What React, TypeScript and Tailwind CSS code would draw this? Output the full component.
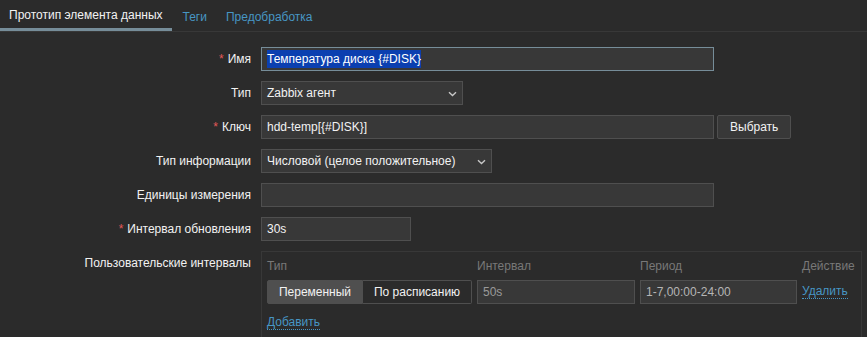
const Req = () => <span className="text-[#e45959] mr-[4px]">*</span>;

const Chevron = () => (
  <svg width="9" height="6" viewBox="0 0 9 6" className="absolute right-[5px] top-[9px]">
    <path d="M1 1.2l3.5 3.3 3.5-3.3" fill="none" stroke="#c8c8c8" strokeWidth="1.4" />
  </svg>
);

const Row = ({ label, req, children }: { label: string; req?: boolean; children: React.ReactNode }) => (
  <div className="flex items-start">
    <div className="w-[251px] h-[24px] flex items-center justify-end text-[#f2f2f2] shrink-0">
      {req && <Req />}
      {label}
    </div>
    <div className="ml-[10px] flex items-start gap-[3px]">{children}</div>
  </div>
);

const inputCls =
  "h-[24px] bg-[#383838] border border-[#4f4f4f] flex items-center px-[5px] text-[#f2f2f2]";

const Select = ({ value, w }: { value: string; w: string }) => (
  <div className={`${inputCls} relative ${w}`}>
    {value}
    <Chevron />
  </div>
);

export default function App() {
  return (
    <div
      className="w-[867px] h-[337px] overflow-hidden bg-[#2b2b2b] text-[12px]"
      style={{ fontFamily: '"Liberation Sans", Arial, sans-serif' }}
    >
      <div className="flex h-[32px] border-b border-[#383838]">
        <div className="px-[9px] h-[31px] flex items-center text-[#f2f2f2] border-b-[3px] border-[#768d99] pt-[2px]">
          Прототип элемента данных
        </div>
        <div className="pl-[11px] pr-[10px] h-[31px] flex items-center text-[#4796c4] pt-[2px]">Теги</div>
        <div className="px-[9px] h-[31px] flex items-center text-[#4796c4] pt-[2px]">Предобработка</div>
      </div>

      <div className="flex flex-col gap-[10px] pt-[15px]">
        <Row label="Имя" req>
          <div className="h-[24px] w-[453px] bg-[#383838] border border-[#768d99] flex items-center px-[5px]">
            <span className="bg-[#0b3fb0] text-white">Температура диска {"{#DISK}"}</span>
          </div>
        </Row>
        <Row label="Тип">
          <Select value="Zabbix агент" w="w-[202px]" />
        </Row>
        <Row label="Ключ" req>
          <div className={`${inputCls} w-[453px]`}>hdd-temp[{"{#DISK}"}]</div>
          <div className="h-[24px] px-[12px] bg-[#383838] border border-[#4f4f4f] rounded-[2px] flex items-center text-[#f2f2f2]">
            Выбрать
          </div>
        </Row>
        <Row label="Тип информации">
          <Select value="Числовой (целое положительное)" w="w-[231px]" />
        </Row>
        <Row label="Единицы измерения">
          <div className={`${inputCls} w-[453px]`} />
        </Row>
        <Row label="Интервал обновления" req>
          <div className={`${inputCls} w-[150px]`}>30s</div>
        </Row>
        <div className="flex items-start">
          <div className="w-[251px] h-[24px] flex items-center justify-end text-[#f2f2f2] shrink-0">
            Пользовательские интервалы
          </div>
          <div className="ml-[10px] w-[601px] border border-[#383838] px-[5px] pt-[5px] pb-[10px]">
            <div className="grid grid-cols-[205px_158px_157px_auto] gap-x-[5px] text-[#787878]">
              <div className="h-[18px] flex items-center">Тип</div>
              <div className="h-[18px] flex items-center">Интервал</div>
              <div className="h-[18px] flex items-center">Период</div>
              <div className="h-[18px] flex items-center">Действие</div>
              <div className="flex h-[24px] mt-[5px]">
                <div className="w-[96px] bg-[#4f4f4f] border border-[#4f4f4f] rounded-l-[2px] flex items-center justify-center text-[#f2f2f2]">
                  Переменный
                </div>
                <div className="flex-1 border border-[#4f4f4f] border-l-0 rounded-r-[2px] flex items-center justify-center text-[#f2f2f2]">
                  По расписанию
                </div>
              </div>
              <div className="h-[24px] mt-[5px] bg-[#383838] border border-[#4f4f4f] flex items-center px-[5px] text-[#9a9a9a]">
                50s
              </div>
              <div className="h-[24px] mt-[5px] bg-[#383838] border border-[#4f4f4f] flex items-center px-[5px] text-[#b5b5b5]">
                1-7,00:00-24:00
              </div>
              <div className="h-[24px] mt-[5px] flex items-center">
                <span className="text-[#4796c4] border-b border-dotted border-[#4796c4] leading-[13px]">Удалить</span>
              </div>
            </div>
            <div className="mt-[9px]">
              <span className="text-[#4796c4] border-b border-dotted border-[#4796c4]">Добавить</span>
            </div>
          </div>
        </div>
      </div>
    </div>
  );
}
